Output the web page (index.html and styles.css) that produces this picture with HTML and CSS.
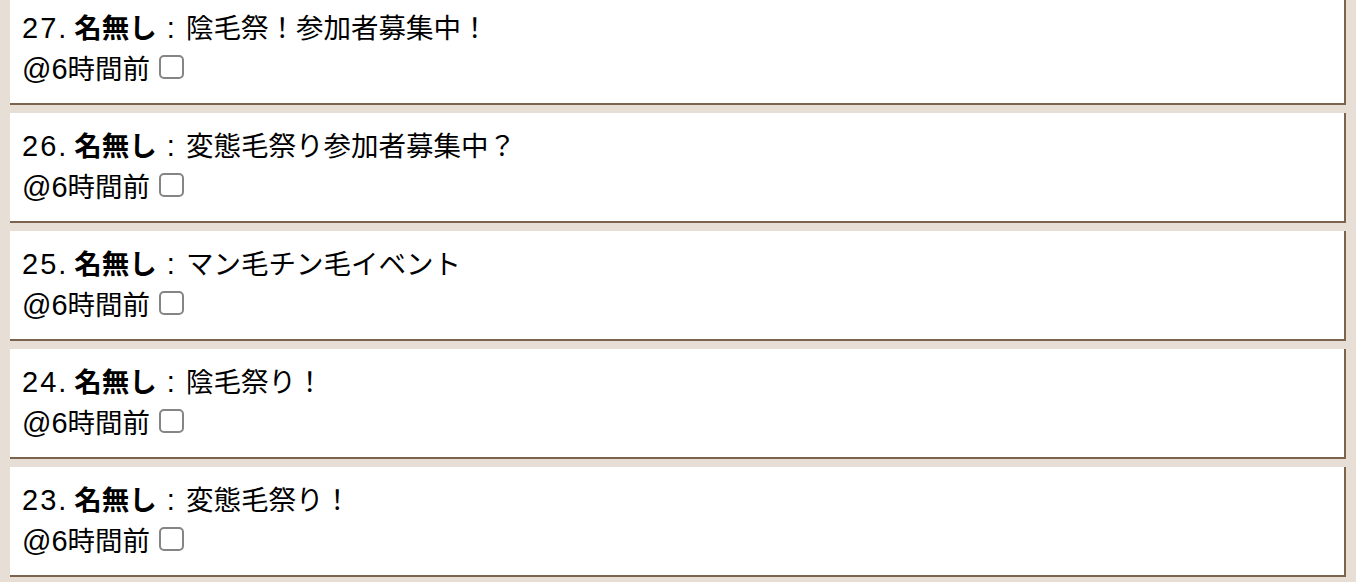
FILE: index.html
```html
<!DOCTYPE html>
<html lang="ja">
<head>
<meta charset="utf-8">
<title>レス一覧</title>
<link rel="stylesheet" href="styles.css">
</head>
<body>
<div class="list">
  <div class="post">
    <div class="line"><span class="num">27.</span><b class="name">名無し</b><span class="sep">:</span>陰毛祭！参加者募集中！</div>
    <div class="line"><span class="lat">@6</span>時間前<input type="checkbox" class="chk"></div>
  </div>
  <div class="post">
    <div class="line"><span class="num">26.</span><b class="name">名無し</b><span class="sep">:</span>変態毛祭り参加者募集中？</div>
    <div class="line"><span class="lat">@6</span>時間前<input type="checkbox" class="chk"></div>
  </div>
  <div class="post">
    <div class="line"><span class="num">25.</span><b class="name">名無し</b><span class="sep">:</span>マン毛チン毛イベント</div>
    <div class="line"><span class="lat">@6</span>時間前<input type="checkbox" class="chk"></div>
  </div>
  <div class="post">
    <div class="line"><span class="num">24.</span><b class="name">名無し</b><span class="sep">:</span>陰毛祭り！</div>
    <div class="line"><span class="lat">@6</span>時間前<input type="checkbox" class="chk"></div>
  </div>
  <div class="post">
    <div class="line"><span class="num">23.</span><b class="name">名無し</b><span class="sep">:</span>変態毛祭り！</div>
    <div class="line"><span class="lat">@6</span>時間前<input type="checkbox" class="chk"></div>
  </div>
</div>
</body>
</html>
```

FILE: styles.css
```css
html, body {
  margin: 0;
  padding: 0;
  background: #e7dfd5;
}
body {
  font-family: "Liberation Sans", "Noto Sans CJK JP", sans-serif;
  font-size: 27.5px;
  color: #000;
  overflow: hidden;
}
.list {
  display: flex;
  flex-direction: column;
  gap: 8px;
  margin: -5px 10px 0 10px;
}
.post {
  background: #ffffff;
  border-right: 2px solid #7c634d;
  border-bottom: 2px solid #7c634d;
  box-sizing: border-box;
  height: 110px;
  padding: 13px 0 0 12px;
}
.line {
  height: 41px;
  line-height: 41px;
  white-space: nowrap;
}
.num {
  font-size: 29px;
  letter-spacing: 2px;
}
.lat {
  font-size: 29px;
}
.name {
  font-weight: bold;
  margin-left: 6px;
}
.sep {
  font-size: 29px;
  padding: 0 11px 0 10px;
}
.chk {
  appearance: none;
  -webkit-appearance: none;
  width: 25px;
  height: 24px;
  margin: 0 0 0 9px;
  border: 2px solid #858585;
  border-radius: 5px;
  background: #fff;
  box-sizing: border-box;
  vertical-align: 0;
}
```
